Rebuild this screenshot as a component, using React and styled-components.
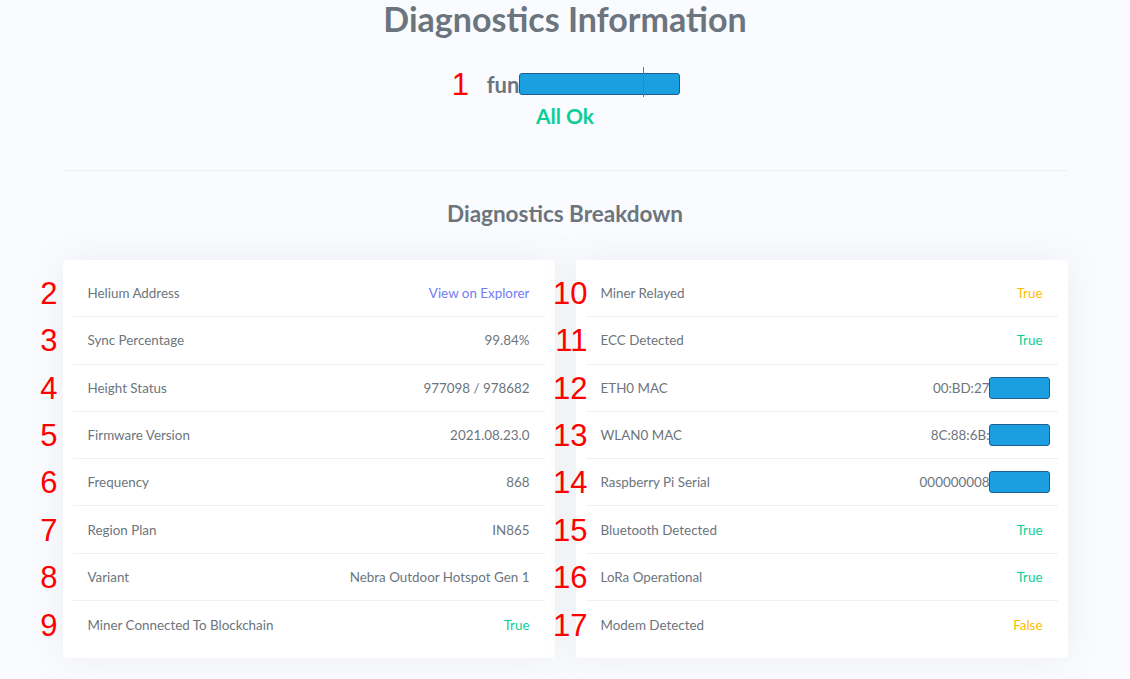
import styled, { createGlobalStyle } from "styled-components";

const GlobalStyle = createGlobalStyle`
  html, body {
    margin: 0;
    padding: 0;
    background: #fafbfe;
  }
  body {
    font-family: Lato, "Noto Sans", sans-serif;
    color: #6c757d;
  }
`;

const Page = styled.div`
  width: 1005px;
  margin: 0 auto;
  padding-bottom: 20px;
`;

const Header = styled.div`
  display: flex;
  flex-direction: column;
  align-items: center;
`;

const Title = styled.h1`
  margin: 0;
  font-size: 34px;
  line-height: 38px;
  font-weight: 700;
  color: #6c757d;
`;

const DeviceLine = styled.div`
  position: relative;
  display: flex;
  align-items: center;
  margin-top: 34px;
  padding-left: 37px;
  height: 24px;
`;

const DeviceName = styled.span`
  font-size: 22px;
  font-weight: 700;
  color: #6c757d;
`;

const Redacted = styled.span`
  display: inline-block;
  flex-shrink: 0;
  width: ${(p) => p.w}px;
  height: ${(p) => p.h}px;
  background: #1b9fe0;
  border: 1px solid #1f5f8f;
  border-radius: 3px;
  box-sizing: border-box;
  vertical-align: middle;
`;

const MaskedValue = styled(Redacted)`
  margin-left: -1px;
  margin-right: -7px;
`;

const Cursor = styled.span`
  position: absolute;
  top: -5px;
  right: 36px;
  width: 1px;
  height: 30px;
  background: #6c757d;
`;

const Status = styled.div`
  margin-top: 7px;
  font-size: 21px;
  font-weight: 700;
  color: #0acf97;
`;

const Divider = styled.hr`
  margin: 42px 0 0;
  border: 0;
  border-top: 1px solid #eef0f4;
`;

const SubTitle = styled.h4`
  margin: 29px 0 0;
  text-align: center;
  font-size: 22.5px;
  line-height: 28px;
  font-weight: 700;
  color: #6c757d;
`;

const Grid = styled.div`
  display: grid;
  grid-template-columns: 1fr 1fr;
  gap: 21px;
  margin-top: 32px;
`;

const Card = styled.div`
  background: #fff;
  border-radius: 4px;
  box-shadow: 0 0 35px 0 rgba(154, 161, 171, 0.15);
  padding: 10px;
`;

const Row = styled.div`
  position: relative;
  display: flex;
  align-items: center;
  justify-content: space-between;
  height: 47.3px;
  padding: 0 15px;
  font-size: 13.4px;
  border-bottom: 1px solid #eef0f4;
  box-sizing: border-box;
  &:last-child {
    border-bottom: 0;
  }
`;

const Label = styled.span`
  color: #6c757d;
`;

const Value = styled.span`
  display: flex;
  align-items: center;
  color: ${(p) =>
    p.tone === "success"
      ? "#0acf97"
      : p.tone === "warning"
      ? "#ffbc00"
      : p.tone === "link"
      ? "#727cf5"
      : "#6c757d"};
`;

const Marker = styled.span`
  position: absolute;
  top: 50%;
  right: calc(100% + ${(p) => p.gap}px);
  transform: translateY(-50%);
  font-family: "Liberation Sans", Arial, sans-serif;
  font-size: 31px;
  line-height: 1;
  color: #ff0000;
  white-space: nowrap;
`;

const HeaderMarker = styled(Marker)`
  right: auto;
  left: 2px;
`;

const leftRows = [
  { n: 2, label: "Helium Address", value: "View on Explorer", tone: "link" },
  { n: 3, label: "Sync Percentage", value: "99.84%" },
  { n: 4, label: "Height Status", value: "977098 / 978682" },
  { n: 5, label: "Firmware Version", value: "2021.08.23.0" },
  { n: 6, label: "Frequency", value: "868" },
  { n: 7, label: "Region Plan", value: "IN865" },
  { n: 8, label: "Variant", value: "Nebra Outdoor Hotspot Gen 1" },
  { n: 9, label: "Miner Connected To Blockchain", value: "True", tone: "success" },
];

const rightRows = [
  { n: 10, label: "Miner Relayed", value: "True", tone: "warning" },
  { n: 11, label: "ECC Detected", value: "True", tone: "success" },
  { n: 12, label: "ETH0 MAC", value: "00:BD:27", hidden: true },
  { n: 13, label: "WLAN0 MAC", value: "8C:88:6B:", hidden: true },
  { n: 14, label: "Raspberry Pi Serial", value: "000000008", hidden: true },
  { n: 15, label: "Bluetooth Detected", value: "True", tone: "success" },
  { n: 16, label: "LoRa Operational", value: "True", tone: "success" },
  { n: 17, label: "Modem Detected", value: "False", tone: "warning" },
];

const InfoCard = ({ rows, markerGap }) => (
  <Card>
    {rows.map((r) => (
      <Row key={r.n}>
        <Marker gap={markerGap}>{r.n}</Marker>
        <Label>{r.label}</Label>
        <Value tone={r.tone}>
          {r.value}
          {r.hidden && <MaskedValue w={61} h={22} />}
        </Value>
      </Row>
    ))}
  </Card>
);

const App = () => {
  return (
    <>
      <GlobalStyle />
      <Page>
        <Header>
          <Title>Diagnostics Information</Title>
          <DeviceLine>
            <HeaderMarker>1</HeaderMarker>
            <DeviceName>fun</DeviceName>
            <Redacted w={161} h={22} />
            <Cursor />
          </DeviceLine>
          <Status>All Ok</Status>
        </Header>
        <Divider />
        <SubTitle>Diagnostics Breakdown</SubTitle>
        <Grid>
          <InfoCard rows={leftRows} markerGap={15} />
          <InfoCard rows={rightRows} markerGap={-2} />
        </Grid>
      </Page>
    </>
  );
};

export default App;
